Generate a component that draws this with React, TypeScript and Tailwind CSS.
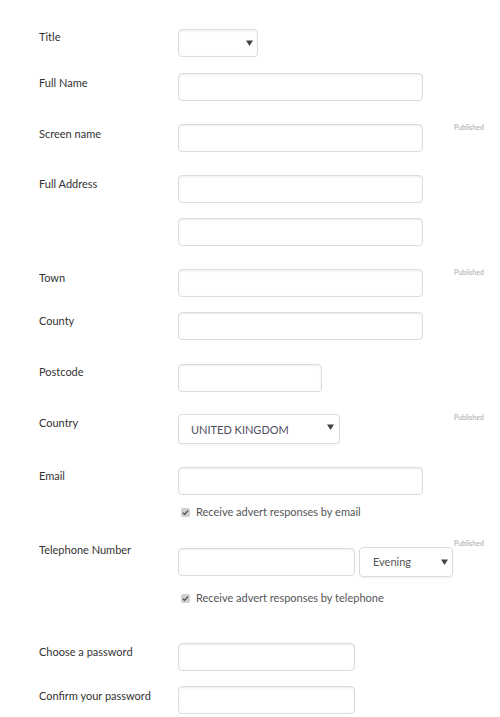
import type { ReactNode } from 'react';

const font = { fontFamily: 'Lato, "Liberation Sans", Arial, sans-serif' };

const fieldBox =
  'h-[28px] rounded-[4px] border border-[#dcdcdc] bg-white shadow-[inset_0_1px_2px_rgba(0,0,0,0.08)]';

const Arrow = () => (
  <svg width="7" height="6" viewBox="0 0 7 6" className="shrink-0">
    <path d="M0 0.5h7L3.5 6z" fill="#444" />
  </svg>
);

const Check = () => (
  <span className="flex h-[9px] w-[9px] items-center justify-center rounded-[2px] bg-[#cfcfcf]">
    <svg width="7" height="7" viewBox="0 0 7 7">
      <path d="M1 3.8l1.6 1.6L6 1.6" fill="none" stroke="#444" strokeWidth="1.3" />
    </svg>
  </span>
);

const Row = ({
  label,
  published,
  className,
  labelPad = 'pt-[2px]',
  children,
}: {
  label?: string;
  published?: boolean;
  className: string;
  labelPad?: string;
  children: ReactNode;
}) => (
  <div className={`flex items-start ${className}`}>
    <div className={`w-[139px] shrink-0 ${labelPad} text-[11px] leading-[14px] text-[#333]`}>{label}</div>
    <div className="w-[276px] shrink-0">{children}</div>
    {published && <div className="-mt-[1px] text-[7px] leading-[9px] text-[#a9a9a9]">Published</div>}
  </div>
);

const CheckRow = ({ text, className }: { text: string; className: string }) => (
  <div className={`flex items-center pl-[142px] ${className}`}>
    <Check />
    <span className="ml-[6px] text-[11px] leading-[14px] text-[#555]">{text}</span>
  </div>
);

export default function App() {
  return (
    <div className="min-h-[717px] w-[500px] bg-white pl-[39px] pt-[29px]" style={font}>
      <Row label="Title" labelPad="pt-[1px]" className="">
        <div className={`${fieldBox} flex w-[80px] items-center justify-end pr-[4px]`}>
          <Arrow />
        </div>
      </Row>

      <Row label="Full Name" labelPad="pt-[3px]" className="mt-[16px]">
        <div className={`${fieldBox} w-[245px]`} />
      </Row>

      <Row label="Screen name" labelPad="pt-[3px]" published className="mt-[23px]">
        <div className={`${fieldBox} w-[245px]`} />
      </Row>

      <Row label="Full Address" className="mt-[23px]">
        <div className={`${fieldBox} w-[245px]`} />
      </Row>

      <Row className="mt-[15px]">
        <div className={`${fieldBox} w-[245px]`} />
      </Row>

      <Row label="Town" published className="mt-[23px]">
        <div className={`${fieldBox} w-[245px]`} />
      </Row>

      <Row label="County" className="mt-[15px]">
        <div className={`${fieldBox} w-[245px]`} />
      </Row>

      <Row label="Postcode" labelPad="pt-[1px]" className="mt-[24px]">
        <div className={`${fieldBox} w-[144px]`} />
      </Row>

      <Row label="Country" published className="mt-[22px]">
        <div className="flex h-[30px] w-[162px] items-center justify-between rounded-[4px] border border-[#dcdcdc] bg-white pl-[12px] pr-[5px] shadow-[0_1px_2px_rgba(0,0,0,0.06)]">
          <span className="pt-[2px] text-[11px] text-[#52505e]">UNITED KINGDOM</span>
          <span className="-mt-[4px]">
            <Arrow />
          </span>
        </div>
      </Row>

      <Row label="Email" className="mt-[23px]">
        <div className={`${fieldBox} w-[245px]`} />
      </Row>

      <CheckRow text="Receive advert responses by email" className="mt-[10px]" />

      <div className="mt-[28px] flex items-start">
        <div className="-mt-[4px] w-[139px] shrink-0 text-[11px] leading-[14px] text-[#333]">Telephone Number</div>
        <div className="flex w-[276px] shrink-0 gap-[4px]">
          <div className={`${fieldBox} mt-[1px] w-[177px]`} />
          <div className="flex h-[30px] w-[94px] items-center justify-between rounded-[4px] border border-[#dcdcdc] bg-white pl-[13px] pr-[4px] shadow-[0_1px_2px_rgba(0,0,0,0.06)]">
            <span className="text-[11px] text-[#555]">Evening</span>
            <Arrow />
          </div>
        </div>
        <div className="-mt-[8px] text-[7px] leading-[9px] text-[#a9a9a9]">Published</div>
      </div>

      <CheckRow text="Receive advert responses by telephone" className="mt-[14px]" />

      <Row label="Choose a password" className="mt-[38px]">
        <div className={`${fieldBox} w-[177px]`} />
      </Row>

      <Row label="Confirm your password" labelPad="pt-[3px]" className="mt-[15px]">
        <div className={`${fieldBox} w-[177px]`} />
      </Row>
    </div>
  );
}
